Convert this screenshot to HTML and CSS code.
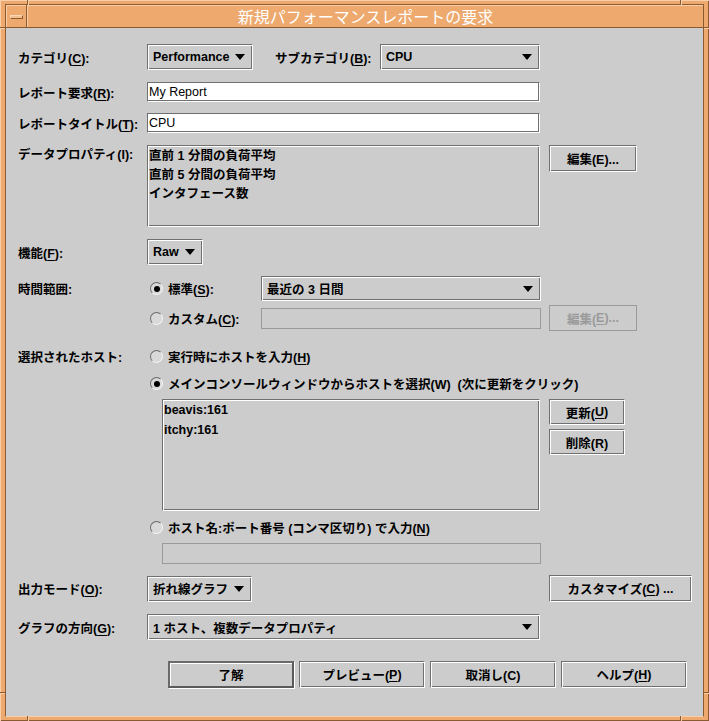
FILE: index.html
```html
<!DOCTYPE html>
<html lang="ja">
<head>
<meta charset="utf-8">
<title>新規パフォーマンスレポートの要求</title>
<link rel="stylesheet" href="styles.css">
</head>
<body>
<div class="window">
  <span class="tick tick-top tick-l"></span>
  <span class="tick tick-top tick-r"></span>
  <span class="tick tick-bottom tick-l"></span>
  <span class="tick tick-bottom tick-r"></span>
  <span class="tick tick-side tick-lt"></span>
  <span class="tick tick-side tick-lb"></span>
  <span class="tick tick-side tick-rt"></span>
  <span class="tick tick-side tick-rb"></span>
  <div class="frame">
    <div class="titlebar">
      <div class="menu-btn"><span class="menu-bar"></span></div>
      <div class="title">新規パフォーマンスレポートの要求</div>
    </div>
    <div class="content">
      <div class="row r-cat">
        <div class="label">カテゴリ(<u>C</u>):</div>
        <div class="cell cell-cat">
          <div class="combo etched"><span>Performance</span><i class="arrow"></i></div>
        </div>
        <div class="sublabel">サブカテゴリ(<u>B</u>):</div>
        <div class="combo etched combo-cpu"><span>CPU</span><i class="arrow"></i></div>
      </div>

      <div class="row r-req">
        <div class="label">レポート要求(<u>R</u>):</div>
        <div class="field">My Report</div>
      </div>

      <div class="row r-title">
        <div class="label">レポートタイトル(<u>T</u>):</div>
        <div class="field">CPU</div>
      </div>

      <div class="row r-props">
        <div class="label label-top">データプロパティ(I):</div>
        <div class="list etched list-props">
          <div class="item">直前 1 分間の負荷平均</div>
          <div class="item">直前 5 分間の負荷平均</div>
          <div class="item">インタフェース数</div>
        </div>
        <div class="btn etched btn-edit">編集(E)...</div>
      </div>

      <div class="row r-func">
        <div class="label">機能(<u>F</u>):</div>
        <div class="combo etched"><span>Raw</span><i class="arrow"></i></div>
      </div>

      <div class="row r-std">
        <div class="label">時間範囲:</div>
        <div class="radio-opt opt-time"><span class="radio on"></span><span>標準(<u>S</u>):</span></div>
        <div class="combo etched combo-time"><span>最近の 3 日間</span><i class="arrow"></i></div>
      </div>

      <div class="row r-custom">
        <div class="label"></div>
        <div class="radio-opt opt-time"><span class="radio"></span><span>カスタム(<u>C</u>):</span></div>
        <div class="field field-disabled field-custom"></div>
        <div class="btn btn-disabled btn-edit2">編集(<u>E</u>)...</div>
      </div>

      <div class="row r-host1">
        <div class="label">選択されたホスト:</div>
        <div class="radio-opt"><span class="radio"></span><span>実行時にホストを入力(<u>H</u>)</span></div>
      </div>

      <div class="row r-host2">
        <div class="label"></div>
        <div class="radio-opt"><span class="radio on"></span><span>メインコンソールウィンドウからホストを選択(W)&nbsp; (次に更新をクリック)</span></div>
      </div>

      <div class="row r-hostlist">
        <div class="label"></div>
        <div class="list etched list-hosts">
          <div class="item">beavis:161</div>
          <div class="item">itchy:161</div>
        </div>
        <div class="btn-stack">
          <div class="btn etched btn-small">更新(<u>U</u>)</div>
          <div class="btn etched btn-small">削除(R)</div>
        </div>
      </div>

      <div class="row r-host3">
        <div class="label"></div>
        <div class="radio-opt"><span class="radio"></span><span>ホスト名:ポート番号 (コンマ区切り) で入力(<u>N</u>)</span></div>
      </div>

      <div class="row r-hostfield">
        <div class="label"></div>
        <div class="field field-disabled field-host"></div>
      </div>

      <div class="row r-out">
        <div class="label">出力モード(<u>O</u>):</div>
        <div class="cell cell-out">
          <div class="combo etched"><span>折れ線グラフ</span><i class="arrow"></i></div>
        </div>
        <div class="btn etched btn-custom">カスタマイズ(<u>C</u>) ...</div>
      </div>

      <div class="row r-graph">
        <div class="label">グラフの方向(<u>G</u>):</div>
        <div class="combo etched combo-graph"><span>1 ホスト、複数データプロパティ</span><i class="arrow"></i></div>
      </div>

      <div class="row r-buttons">
        <div class="btn btn-default">了解</div>
        <div class="btn etched btn-bottom">プレビュー(<u>P</u>)</div>
        <div class="btn etched btn-bottom">取消し(C)</div>
        <div class="btn etched btn-bottom">ヘルプ(<u>H</u>)</div>
      </div>
    </div>
  </div>
</div>
</body>
</html>
```

FILE: styles.css
```css
html, body {
  margin: 0;
  padding: 0;
  background: #eda96e;
}

.window {
  position: relative;
  width: 709px;
  height: 721px;
  box-sizing: border-box;
  padding: 4px 5px 4px 5px;
  background: #eda96e;
  box-shadow: inset 1px 1px 0 #f9cfa9, inset -1px -1px 0 #8a5a30;
  font-family: "Liberation Sans", "Noto Sans CJK JP", sans-serif;
  font-size: 12.5px;
  font-weight: bold;
  color: #000;
}

.tick {
  position: absolute;
  display: block;
}
.tick-top, .tick-bottom {
  width: 1px;
  height: 5px;
  background: #8a5a30;
  box-shadow: 1px 0 0 #f9cfa9;
}
.tick-top { top: 0; }
.tick-bottom { bottom: 0; }
.tick-l { left: 27px; }
.tick-r { left: 680px; }
.tick-side {
  width: 5px;
  height: 1px;
  background: #8a5a30;
  box-shadow: 0 1px 0 #f9cfa9;
}
.tick-lt { left: 0; top: 27px; }
.tick-lb { left: 0; top: 692px; }
.tick-rt { right: 0; top: 27px; }
.tick-rb { right: 0; top: 692px; }

.frame {
  height: 100%;
  box-sizing: border-box;
  border: 1px solid #8a5a30;
  border-bottom-color: #f9cfa9;
  display: flex;
  flex-direction: column;
}

.titlebar {
  height: 22px;
  flex: none;
  display: flex;
  background: #eda96e;
  border-bottom: 1px solid #8a5a30;
  box-shadow: inset 1px 1px 0 #f9cfa9;
}

.menu-btn {
  width: 21px;
  flex: none;
  border-right: 1px solid #f9cfa9;
  box-shadow: inset -1px 0 0 #8a5a30;
  position: relative;
}
.menu-bar {
  position: absolute;
  left: 4px;
  top: 10px;
  width: 13px;
  height: 4px;
  box-sizing: border-box;
  background: #f4bf8f;
  border: 1px solid #f9d6b5;
  border-right-color: #8a5a30;
  border-bottom-color: #8a5a30;
}

.title {
  flex: 1;
  text-align: center;
  color: #ffffff;
  font-family: "Noto Sans CJK JP", sans-serif;
  font-weight: normal;
  font-size: 16px;
  line-height: 22px;
}

.content {
  flex: 1;
  background: #cccccc;
  padding: 16px 0 0 12px;
}

.row {
  display: flex;
  align-items: center;
}

u {
  text-decoration: underline;
  text-underline-offset: 2px;
}

.label {
  width: 129px;
  flex: none;
  white-space: nowrap;
}
.label-top {
  align-self: flex-start;
  padding-top: 1px;
  line-height: 19px;
}

.cell {
  display: flex;
  flex: none;
}
.cell-cat { width: 128px; }
.cell-out { width: 393px; }

.sublabel {
  width: 105px;
  flex: none;
  white-space: nowrap;
}

.etched {
  box-sizing: border-box;
  border: 1px solid;
  border-color: #707070 #ffffff #ffffff #707070;
  box-shadow: inset 1px 1px 0 #ffffff, inset -1px -1px 0 #707070;
}

.combo {
  height: 26px;
  display: flex;
  align-items: center;
  padding: 0 7px 0 5px;
  flex: none;
  white-space: nowrap;
}
.combo .arrow {
  display: block;
  width: 0;
  height: 0;
  border-left: 5px solid transparent;
  border-right: 5px solid transparent;
  border-top: 6px solid #000;
  margin-left: 6px;
}
.combo-cpu { width: 160px; }
.combo-cpu .arrow,
.combo-time .arrow,
.combo-graph .arrow { margin-left: auto; }
.combo-time { width: 280px; height: 25px; }
.combo-graph { width: 393px; }

.field {
  box-sizing: border-box;
  width: 393px;
  height: 20px;
  background: #ffffff;
  border: 1px solid;
  border-color: #707070 #ffffff #ffffff #707070;
  box-shadow: inset -1px -1px 0 #707070;
  font-weight: normal;
  font-size: 12.5px;
  line-height: 18px;
  padding-left: 1px;
}
.field-disabled {
  background: #cccccc;
  border: 1px solid #9a9a9a;
  box-shadow: none;
}
.field-custom { width: 280px; height: 21px; }
.field-host { width: 379px; height: 21px; margin-left: 15px; }

.list {
  background: #cccccc;
  padding: 1px 0 0 1px;
}
.list .item {
  line-height: 19px;
  white-space: nowrap;
}
.list-props { width: 393px; height: 82px; }
.list-hosts { width: 378px; height: 112px; margin-left: 15px; padding-top: 0; }
.list-hosts .item { line-height: 20px; }

.btn {
  box-sizing: border-box;
  display: flex;
  align-items: center;
  justify-content: center;
  flex: none;
  white-space: nowrap;
}
.btn-edit {
  width: 88px;
  height: 27px;
  margin-left: 9px;
  align-self: flex-start;
}
.btn-disabled {
  border: 1px solid #9a9a9a;
  color: #9a9a9a;
}
.btn-edit2 {
  width: 88px;
  height: 26px;
  margin-left: 8px;
}

.r-req { margin-top: 12px; }
.r-title { margin-top: 11px; }
.r-props { margin-top: 12px; align-items: flex-start; }
.r-func { margin-top: 12px; }
.r-std { margin-top: 11px; }
.r-custom { margin-top: 4px; }
.r-host1 { margin-top: 16px; height: 19px; }
.r-host2 { margin-top: 8px; height: 19px; }
.r-hostlist { margin-top: 6px; align-items: flex-start; }
.r-host3 { margin-top: 7px; height: 19px; }
.r-hostfield { margin-top: 6px; }
.r-out { margin-top: 11px; }
.r-graph { margin-top: 12px; }
.r-buttons { margin-top: 21px; padding-left: 150px; gap: 5px; }

.radio-opt {
  display: flex;
  align-items: center;
  gap: 5px;
  padding-left: 3px;
  white-space: nowrap;
}
.opt-time { width: 111px; flex: none; }

.radio {
  display: block;
  position: relative;
  width: 13px;
  height: 13px;
  box-sizing: border-box;
  border-radius: 50%;
  border: 1px solid;
  border-color: #6a6a6a #f6f6f6 #f6f6f6 #6a6a6a;
  background: #d9d9d9;
  flex: none;
}
.radio.on::after {
  content: "";
  position: absolute;
  left: 2.5px;
  top: 2.5px;
  width: 6px;
  height: 6px;
  border-radius: 50%;
  background: #000;
}

.btn-stack {
  display: flex;
  flex-direction: column;
  gap: 4px;
  margin-left: 9px;
}
.btn-small { width: 76px; height: 26px; }

.btn-custom { width: 143px; height: 27px; margin-left: 9px; }

.btn-bottom { width: 126px; height: 27px; }
.btn-default {
  width: 126px;
  height: 27px;
  border: 2px solid #6a6a6a;
  border-right-color: #5a5a5a;
  border-bottom-color: #5a5a5a;
  box-shadow: 1px 1px 0 #ffffff, inset 1px 1px 0 #ffffff;
}
```
